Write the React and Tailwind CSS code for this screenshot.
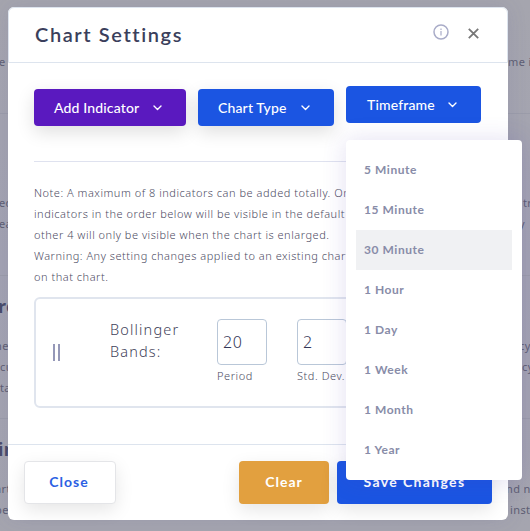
import React from 'react';

const timeframes = ['5 Minute', '15 Minute', '30 Minute', '1 Hour', '1 Day', '1 Week', '1 Month', '1 Year'];

function Chevron() {
  return (
    <svg width="9" height="6" viewBox="0 0 9 6" fill="none" stroke="currentColor" strokeWidth="1.4" strokeLinecap="round" strokeLinejoin="round" className="mt-0.5">
      <path d="M1 1l3.5 3.5L8 1" />
    </svg>
  );
}

function BackgroundRow({ left, right, leftClass, rightClass }) {
  return (
    <div className="h-[21px] flex whitespace-pre">
      <div className="w-[508px] shrink-0">
        <span className={leftClass}>{left}</span>
      </div>
      <span className={rightClass}>{right}</span>
    </div>
  );
}

function Background() {
  return (
    <div className="h-[531px] overflow-hidden bg-linear-to-b from-[#a5a5ae] via-[#a3a3b2] to-[#a5a5af] font-['Noto_Sans',sans-serif] text-[11px] leading-[21px] tracking-[0.4px] text-[#5e5e73]">
      <div className="h-[114px] pt-[51px] border-b border-[#9b9ca9]">
        <BackgroundRow left="e" leftClass="-ml-px" right="me i" />
      </div>
      <div className="h-[162px] pt-[78px] border-b border-[#9b9ca9]">
        <BackgroundRow left="ed" leftClass="-ml-px" right="tr" rightClass="pl-[15px]" />
        <BackgroundRow left="ea" leftClass="-ml-px" right="y" rightClass="pl-[11px]" />
      </div>
      <div className="h-[143px] pt-[20px] border-b border-[#9b9ca9]">
        <h3 className="h-[39px] -ml-[2px] text-[18px] font-bold text-[#494b69]">re</h3>
        <BackgroundRow left="ne" leftClass="-ml-[5px]" right="cy" rightClass="pl-[11px]" />
        <BackgroundRow left="cu" right="cy" rightClass="pl-[14px]" />
        <BackgroundRow left="ta" />
      </div>
      <div className="pt-[20px]">
        <h3 className="h-[39px] -ml-[2px] text-[18px] font-bold text-[#494b69]">in</h3>
        <BackgroundRow left="art" leftClass="-ml-[5px]" right="nd no" rightClass="-ml-0.5" />
        <BackgroundRow left="be" leftClass="-ml-[5px]" right="inst" rightClass="pl-[2px]" />
      </div>
    </div>
  );
}

function TimeframeMenu() {
  return (
    <ul className="absolute top-[54px] left-0 z-10 w-[176px] h-[340px] p-[10px] rounded bg-white shadow-[0_0_24px_rgba(82,63,175,0.16)]">
      {timeframes.map((label) => (
        <li
          key={label}
          className={`h-10 px-2 text-[12px] leading-10 font-bold tracking-[0.55px] text-[#888ca8] ${label === '30 Minute' ? 'bg-[#f0f1f3]' : ''}`}
        >
          {label}
        </li>
      ))}
    </ul>
  );
}

function IndicatorField({ label, value }) {
  return (
    <div className="w-[50px] shrink-0 whitespace-nowrap">
      <input
        defaultValue={value}
        className="block w-[50px] h-[46px] pl-[5px] border border-[#b9c7d8] rounded text-[16px] tracking-[0.6px] text-[#353758] outline-none"
      />
      <label className="block mt-[1px] text-[11px] leading-[20px] tracking-[0.55px] text-[#4c4b63]">{label}</label>
    </div>
  );
}

function App() {
  return (
    <div className="relative w-[530px] h-[531px] overflow-hidden font-['Lato',sans-serif]">
      <Background />
      <div className="absolute left-2 top-[7px] w-[500px] h-[513px] rounded-md bg-white flex flex-col shadow-[0_0_20px_rgba(80,80,150,0.12)]">
        <header className="h-14 shrink-0 flex items-center pl-[26px] pr-[28px] border border-[#dde4ee] rounded-t-md">
          <h2 className="grow text-[20px] font-semibold tracking-[1.6px] text-[#3b3f5c] -mt-[3px]">Chart Settings</h2>
          <svg width="16" height="16" viewBox="0 0 16 16" fill="none" stroke="#a9acc8" strokeWidth="1.5" className="mr-[19px] -mt-1.5">
            <circle cx="8" cy="8" r="7" />
            <path d="M8 7v4.4M8 4.5v1.4" strokeWidth="1.2" />
          </svg>
          <svg width="11" height="11" viewBox="0 0 11 11" fill="none" stroke="#777" strokeWidth="1.8" className="-mt-1">
            <path d="M.8.8l9.4 9.4M10.2.8L.8 10.2" />
          </svg>
        </header>

        <div className="h-[382px] shrink-0 px-[26px] pt-[26px] border-b border-[#dde4ee]">
          <div className="flex gap-3 text-[14px] font-medium tracking-[0.15px] text-white">
            <button className="w-[152px] h-[37px] pb-px rounded bg-[#5a19bf] flex items-center pl-5 pr-[24px] justify-between shadow-[0_6px_18px_rgba(0,0,0,0.13)]">
              <span>Add Indicator</span>
              <Chevron />
            </button>
            <button className="w-[136px] h-[37px] pb-px rounded bg-[#1b55e2] flex items-center pl-5 pr-[24px] justify-between shadow-[0_6px_18px_rgba(0,0,0,0.13)]">
              <span>Chart Type</span>
              <Chevron />
            </button>
            <div className="relative -mt-[3px] h-10">
              <button className="w-[135px] h-[37px] pb-px rounded bg-[#1b55e2] flex items-center pl-[21px] pr-[24px] justify-between">
                <span>Timeframe</span>
                <Chevron />
              </button>
              <TimeframeMenu />
            </div>
          </div>

          <hr className="mt-[35px] border-[#dfe2ef]" />

          <p className="mt-[20px] text-[11px] leading-[21px] tracking-[0.52px] whitespace-nowrap text-[#4c4b63] font-light font-['Noto_Sans',sans-serif]">
            Note: A maximum of 8 indicators can be added totally. Only the<br />
            indicators in the order below will be visible in the default<br />
            other 4 will only be visible when the chart is enlarged.<br />
            Warning: Any setting changes applied to an existing chart<br />
            on that chart.
          </p>

          <div className="mt-[10px] h-[111px] flex border-2 border-[#e0e5ee] rounded-md overflow-hidden pt-5 font-light font-['Noto_Sans',sans-serif]">
            <div className="ml-[17px] mt-[25px] w-[7px] h-[17px] shrink-0 border-x-2 border-[#9598b8]" />
            <div className="ml-[50px] -mt-px w-[107px] shrink-0 text-[14.5px] leading-[22px] tracking-[1.15px] text-[#3f3f5a]">
              Bollinger<br />Bands:
            </div>
            <div className="flex gap-[30px]">
              <IndicatorField label="Period" value="20" />
              <IndicatorField label="Std. Dev." value="2" />
            </div>
          </div>
        </div>

        <footer className="grow flex items-start pt-4 px-4 text-[14px] font-bold tracking-[1px]">
          <button className="w-[92px] h-[43px] pb-0.5 pr-0.5 rounded bg-white border border-[#e4e5e8] text-[#2c5fe3] shadow-[0_6px_18px_rgba(0,0,0,0.10)]">Close</button>
          <button className="ml-auto w-[90px] h-[43px] pb-0.5 rounded bg-[#e2a03f] text-white shadow-[0_6px_18px_rgba(0,0,0,0.10)]">Clear</button>
          <button className="ml-2 w-[155px] h-[43px] pb-0.5 rounded bg-[#1b55e2] text-white tracking-[1.35px] shadow-[0_6px_18px_rgba(0,0,0,0.10)]">Save Changes</button>
        </footer>
      </div>
    </div>
  );
}

export default App;
